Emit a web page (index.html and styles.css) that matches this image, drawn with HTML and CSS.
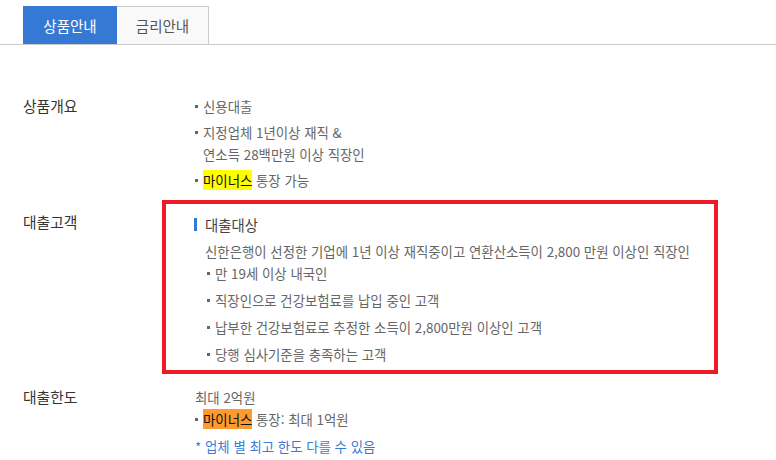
FILE: index.html
```html
<!DOCTYPE html>
<html lang="ko">
<head>
<meta charset="utf-8">
<link rel="stylesheet" href="styles.css">
</head>
<body>
<div class="tabs">
  <div class="tab tab-active">상품안내</div>
  <div class="tab">금리안내</div>
</div>

<div class="info">
  <div class="row row-first">
    <div class="label">상품개요</div>
    <ul class="list">
      <li><span>신용대출</span></li>
      <li><span>지정업체 1년이상 재직 &amp;<br>연소득 28백만원 이상 직장인</span></li>
      <li><span><em class="hl-yellow">마이너스</em> 통장 가능</span></li>
    </ul>
  </div>

  <div class="row row-target">
    <div class="label">대출고객</div>
    <div class="content target">
      <h3 class="sub-title">대출대상</h3>
      <p class="desc">신한은행이 선정한 기업에 1년 이상 재직중이고 연환산소득이 2,800 만원 이상인 직장인</p>
      <ul class="list list-sub">
        <li><span>만 19세 이상 내국인</span></li>
        <li><span>직장인으로 건강보험료를 납입 중인 고객</span></li>
        <li><span>납부한 건강보험료로 추정한 소득이 2,800만원 이상인 고객</span></li>
        <li><span>당행 심사기준을 충족하는 고객</span></li>
      </ul>
    </div>
  </div>

  <div class="row row-limit">
    <div class="label">대출한도</div>
    <div class="content">
      <p class="plain">최대 2억원</p>
      <ul class="list list-tight">
        <li><span><em class="hl-orange">마이너스</em> 통장: 최대 1억원</span></li>
      </ul>
      <p class="note">* 업체 별 최고 한도 다를 수 있음</p>
    </div>
  </div>
</div>
</body>
</html>
```

FILE: styles.css
```css
*,
*::before,
*::after {
  box-sizing: border-box;
}

body {
  margin: 0;
  background: #fff;
  font-family: "Noto Sans CJK KR", "Noto Sans", sans-serif;
  color: #666;
}

.tabs {
  display: flex;
  padding: 6px 0 0 23px;
  border-bottom: 1px solid #ccc;
}

.tab {
  width: 92px;
  height: 38px;
  display: flex;
  align-items: center;
  justify-content: center;
  font-size: 14.5px;
  color: #555;
  background: #f9f9f9;
  border: 1px solid #ccc;
  border-left: none;
  border-bottom: none;
}

.tab-active {
  width: 94px;
  background: #3679d4;
  color: #fff;
  border: none;
}

.info {
  padding-left: 23px;
}

.row {
  display: grid;
  grid-template-columns: 172px 1fr;
  align-items: start;
}

.row-first {
  padding-top: 50px;
}

.row-target {
  margin-top: 20px;
}

.row-limit {
  margin-top: 21px;
}

.label {
  font-size: 14.8px;
  line-height: 22px;
  color: #333;
}

.list {
  list-style: none;
  margin: 0;
  padding: 0;
  font-size: 13.4px;
  line-height: 22px;
}

.list li {
  display: flex;
  gap: 5px;
}

.list li::before {
  content: "";
  flex: none;
  width: 3px;
  height: 3px;
  margin-top: 10px;
  background: #666;
}

.list li + li {
  margin-top: 4px;
}

.list-sub li + li {
  margin-top: 5px;
}

em {
  font-style: normal;
  color: #111;
}

.hl-yellow {
  background: #ffff00;
}

.hl-orange {
  background: #ff9a2e;
}

.content {
  font-size: 13.4px;
  line-height: 22px;
}

.target {
  position: relative;
  padding: 3px 0 0 10px;
}

.target::before {
  content: "";
  position: absolute;
  left: -33px;
  top: -11px;
  width: 556px;
  bottom: -9px;
  border: 4px solid #ed1c24;
}

.sub-title {
  position: relative;
  margin: 0;
  font-size: 14.4px;
  font-weight: normal;
  line-height: 22px;
  color: #444;
}

.sub-title::after {
  content: "";
  position: absolute;
  left: -11px;
  top: 4px;
  width: 3px;
  height: 13px;
  background: #3679d4;
}

.desc {
  margin: 4px 0 0;
}

.list-sub {
  padding-left: 2px;
}

.plain {
  margin: 0;
}

.note {
  margin: 5px 0 0;
  color: #3a7bd5;
}
```
